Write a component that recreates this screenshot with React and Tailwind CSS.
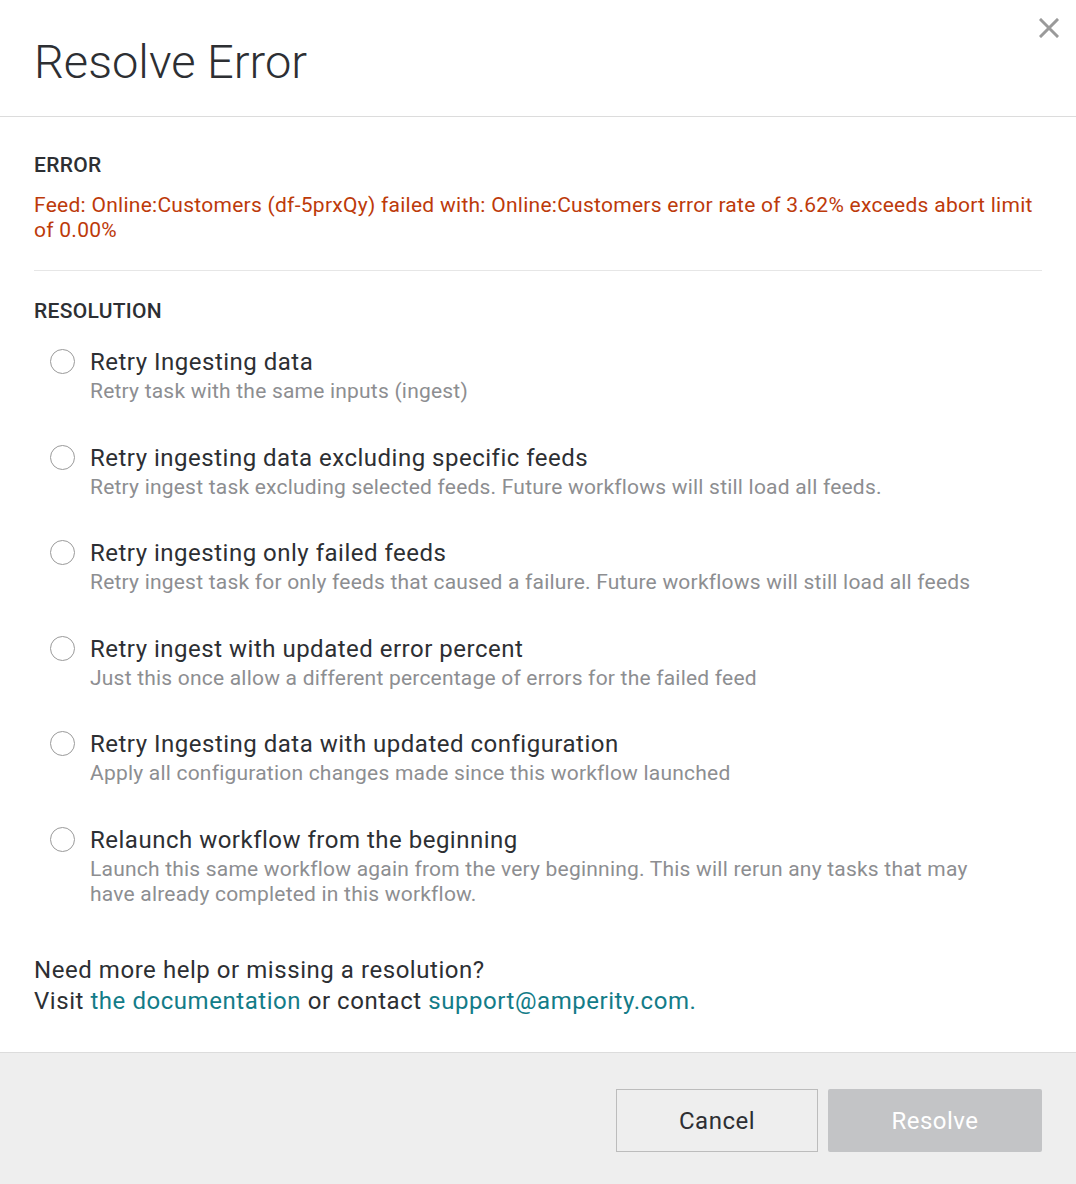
import React from "react";

const options = [
  {
    title: "Retry Ingesting data",
    description: "Retry task with the same inputs (ingest)",
  },
  {
    title: "Retry ingesting data excluding specific feeds",
    description:
      "Retry ingest task excluding selected feeds. Future workflows will still load all feeds.",
  },
  {
    title: "Retry ingesting only failed feeds",
    description:
      "Retry ingest task for only feeds that caused a failure. Future workflows will still load all feeds",
  },
  {
    title: "Retry ingest with updated error percent",
    description:
      "Just this once allow a different percentage of errors for the failed feed",
  },
  {
    title: "Retry Ingesting data with updated configuration",
    description: "Apply all configuration changes made since this workflow launched",
  },
  {
    title: "Relaunch workflow from the beginning",
    description:
      "Launch this same workflow again from the very beginning. This will rerun any tasks that may have already completed in this workflow.",
  },
];

const RadioOption = ({ title, description }) => (
  <label className="flex items-start cursor-pointer">
    <span className="mt-[3px] ml-[16px] mr-[15px] h-[25px] w-[25px] shrink-0 rounded-full border border-[#9a9a9a] bg-white" />
    <span className="flex flex-col pr-[60px]">
      <span className="text-[24px] leading-[32px] tracking-[0.5px] text-[#2d2f33]">{title}</span>
      <span className="mt-[1px] text-[21px] leading-[25px] tracking-[0.21px] text-[#8d8e91]">
        {description}
      </span>
    </span>
  </label>
);

export default function App() {
  return (
    <div
      className="flex min-h-screen w-full flex-col bg-white"
      style={{ fontFamily: "Roboto, 'Liberation Sans', sans-serif" }}
    >
      {/* header */}
      <div className="relative h-[117px] border-b border-[#dcdcdc] pl-[34px]">
        <h1 className="pt-[31px] text-[47px] font-light leading-[62px] text-[#2d2f33]">
          Resolve Error
        </h1>
        <button className="absolute right-[17px] top-[18px] text-[#9a9a9a]">
          <svg width="20" height="20" viewBox="0 0 20 20">
            <path
              d="M2 2 L18 18 M18 2 L2 18"
              stroke="currentColor"
              strokeWidth="3"
              strokeLinecap="square"
            />
          </svg>
        </button>
      </div>

      {/* body */}
      <div className="flex-1 px-[34px] pt-[36px] pb-[35px]">
        <div className="text-[21px] font-medium leading-[24px] tracking-[0.3px] text-[#2d2f33]">
          ERROR
        </div>
        <p className="mt-[16px] text-[21px] leading-[25px] tracking-[0.27px] text-[#bd3a0a]">
          Feed: Online:Customers (df-5prxQy) failed with: Online:Customers error rate of
          3.62% exceeds abort limit of 0.00%
        </p>
        <div className="mt-[27px] border-t border-[#e6e6e6]" />

        <div className="mt-[28px] text-[21px] font-medium leading-[24px] tracking-[0.3px] text-[#2d2f33]">
          RESOLUTION
        </div>
        <div className="mt-[23px] flex flex-col gap-[37.5px]">
          {options.map((opt) => (
            <RadioOption key={opt.title} title={opt.title} description={opt.description} />
          ))}
        </div>

        <div className="mt-[48px] text-[24px] leading-[31px] tracking-[0.55px] text-[#2d2f33]">
          <div>Need more help or missing a resolution?</div>
          <div>
            Visit <a className="text-[#137c88]">the documentation</a> or contact{" "}
            <a className="text-[#137c88]">support@amperity.com.</a>
          </div>
        </div>
      </div>

      {/* footer */}
      <div className="flex h-[132px] justify-end gap-[10px] border-t border-[#dcdcdc] bg-[#eeeeee] px-[34px] pt-[36px]">
        <button className="h-[63px] w-[202px] border border-[#bcbcbc] bg-[#eeeeee] text-[24px] tracking-[0.5px] text-[#2d2f33]">
          Cancel
        </button>
        <button className="h-[63px] w-[214px] rounded-[2px] bg-[#c3c4c6] text-[24px] tracking-[0.5px] text-white">
          Resolve
        </button>
      </div>
    </div>
  );
}
